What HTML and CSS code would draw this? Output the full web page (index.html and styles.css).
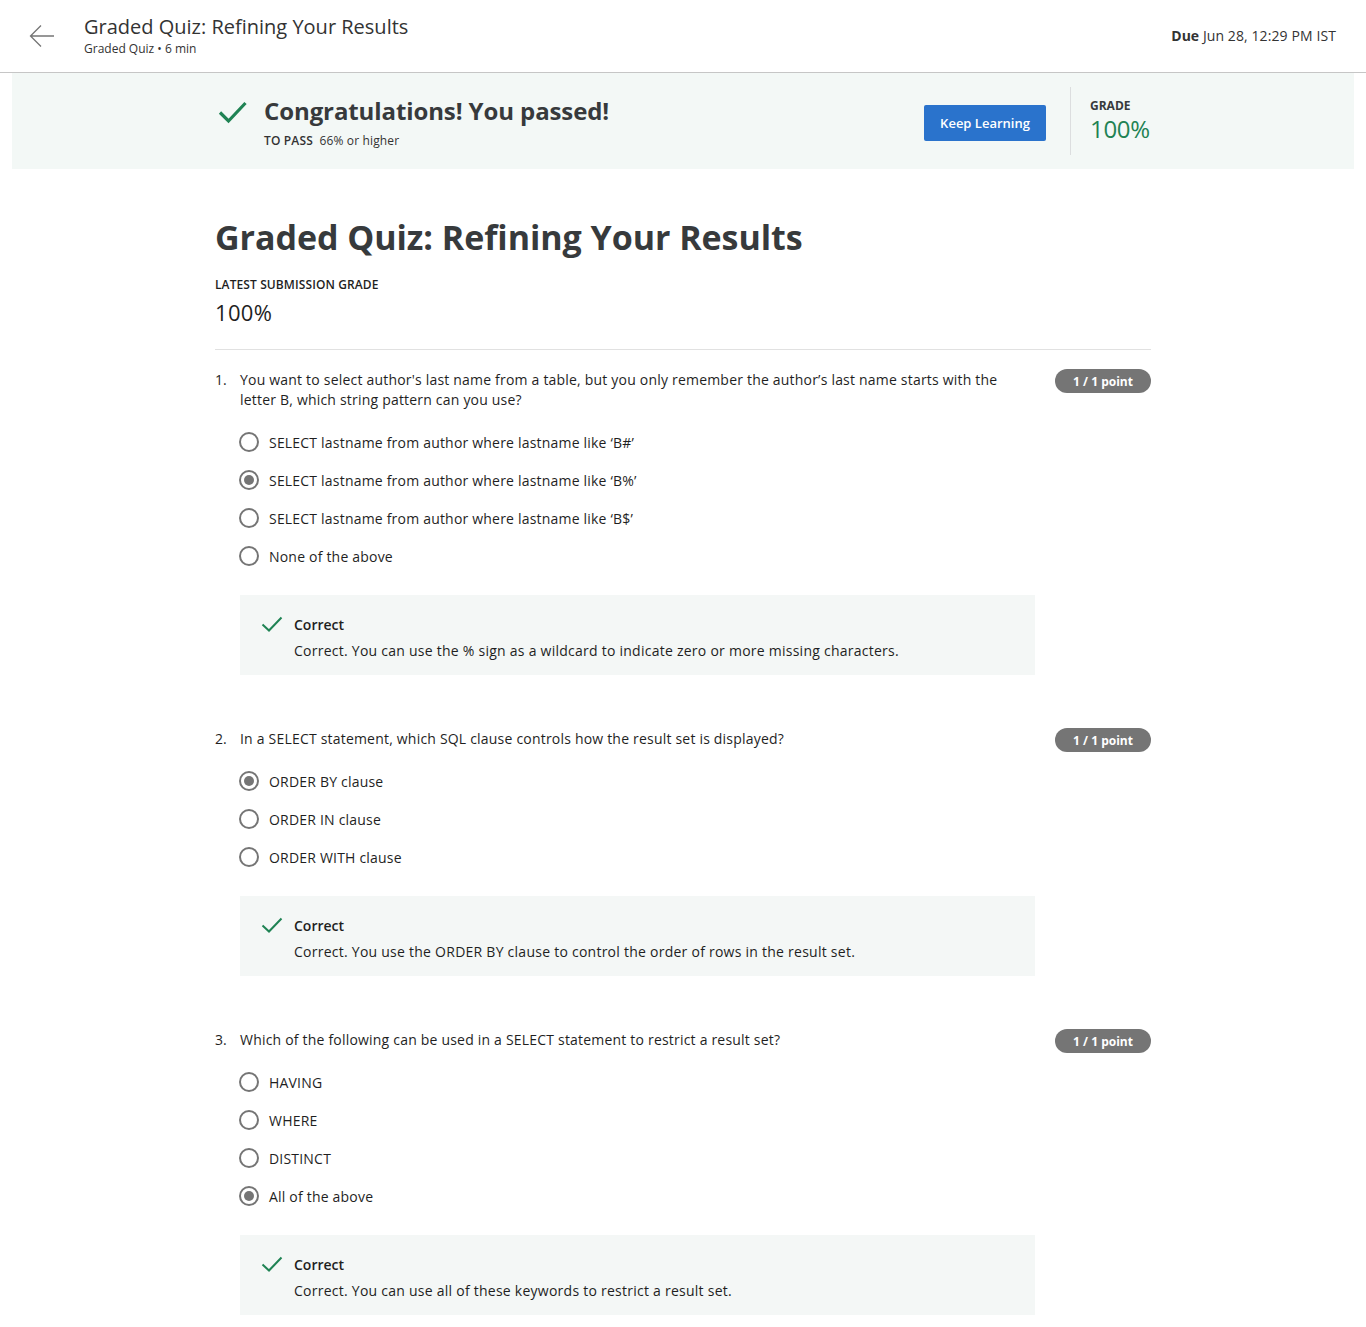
FILE: index.html
```html
<!DOCTYPE html>
<html lang="en">
<head>
<meta charset="utf-8">
<title>Graded Quiz: Refining Your Results</title>
<link rel="stylesheet" href="styles.css">
</head>
<body>
<header class="topbar">
  <div class="topbar-left">
    <svg class="back" width="26" height="26" viewBox="0 0 26 26" aria-hidden="true"><path d="M25 13H2M12 2.5L1.5 13 12 23.5" fill="none" stroke="#757575" stroke-width="1.3"/></svg>
    <div class="topbar-titles">
      <div class="topbar-title">Graded Quiz: Refining Your Results</div>
      <div class="topbar-sub">Graded Quiz • 6 min</div>
    </div>
  </div>
  <div class="due"><b>Due</b> Jun 28, 12:29 PM IST</div>
</header>

<section class="banner">
  <div class="banner-inner">
    <svg class="banner-check" width="30" height="24" viewBox="0 0 30 24" aria-hidden="true"><path d="M2 12.5l8.5 8.5L27.5 3" fill="none" stroke="#1f8354" stroke-width="3.2"/></svg>
    <div class="banner-text">
      <div class="banner-title">Congratulations! You passed!</div>
      <div class="banner-sub"><b>TO PASS</b>&nbsp; 66% or higher</div>
    </div>
    <button class="btn">Keep Learning</button>
    <div class="banner-grade">
      <div class="label">GRADE</div>
      <div class="grade-val">100%</div>
    </div>
  </div>
</section>

<main class="content">
  <h1 class="page-title">Graded Quiz: Refining Your Results</h1>
  <div class="label latest">LATEST SUBMISSION GRADE</div>
  <div class="latest-val">100%</div>
  <hr class="divider">

  <div class="question">
    <div class="q-num">1.</div>
    <div class="q-body">
      <div class="q-text">You want to select author's last name from a table, but you only remember the author’s last name starts with the letter B, which string pattern can you use?</div>
      <div class="options">
        <div class="opt"><span class="radio"></span>SELECT lastname from author where lastname like ‘B#’</div>
        <div class="opt"><span class="radio on"></span>SELECT lastname from author where lastname like ‘B%’</div>
        <div class="opt"><span class="radio"></span>SELECT lastname from author where lastname like ‘B$’</div>
        <div class="opt"><span class="radio"></span>None of the above</div>
      </div>
      <div class="feedback">
        <svg class="fb-check" width="22" height="16" viewBox="0 0 22 16" aria-hidden="true"><path d="M1.5 8.5l6.5 6L20.5 1.5" fill="none" stroke="#1f8354" stroke-width="2"/></svg>
        <div>
          <div class="fb-title">Correct</div>
          <div class="fb-text">Correct. You can use the % sign as a wildcard to indicate zero or more missing characters.</div>
        </div>
      </div>
    </div>
    <div class="badge">1 / 1 point</div>
  </div>

  <div class="question">
    <div class="q-num">2.</div>
    <div class="q-body">
      <div class="q-text">In a SELECT statement, which SQL clause controls how the result set is displayed?</div>
      <div class="options">
        <div class="opt"><span class="radio on"></span>ORDER BY clause</div>
        <div class="opt"><span class="radio"></span>ORDER IN clause</div>
        <div class="opt"><span class="radio"></span>ORDER WITH clause</div>
      </div>
      <div class="feedback">
        <svg class="fb-check" width="22" height="16" viewBox="0 0 22 16" aria-hidden="true"><path d="M1.5 8.5l6.5 6L20.5 1.5" fill="none" stroke="#1f8354" stroke-width="2"/></svg>
        <div>
          <div class="fb-title">Correct</div>
          <div class="fb-text">Correct. You use the ORDER BY clause to control the order of rows in the result set.</div>
        </div>
      </div>
    </div>
    <div class="badge">1 / 1 point</div>
  </div>

  <div class="question">
    <div class="q-num">3.</div>
    <div class="q-body">
      <div class="q-text">Which of the following can be used in a SELECT statement to restrict a result set?</div>
      <div class="options">
        <div class="opt"><span class="radio"></span>HAVING</div>
        <div class="opt"><span class="radio"></span>WHERE</div>
        <div class="opt"><span class="radio"></span>DISTINCT</div>
        <div class="opt"><span class="radio on"></span>All of the above</div>
      </div>
      <div class="feedback">
        <svg class="fb-check" width="22" height="16" viewBox="0 0 22 16" aria-hidden="true"><path d="M1.5 8.5l6.5 6L20.5 1.5" fill="none" stroke="#1f8354" stroke-width="2"/></svg>
        <div>
          <div class="fb-title">Correct</div>
          <div class="fb-text">Correct. You can use all of these keywords to restrict a result set.</div>
        </div>
      </div>
    </div>
    <div class="badge">1 / 1 point</div>
  </div>
</main>
</body>
</html>
```

FILE: styles.css
```css
* { box-sizing: border-box; }
body {
  margin: 0;
  font-family: "Open Sans", "Noto Sans", sans-serif;
  color: #1f1f1f;
  background: #fff;
}
.topbar {
  height: 73px;
  border-bottom: 1px solid #c6c6c6;
  display: flex;
  justify-content: space-between;
  align-items: flex-start;
  padding: 0 30px 0 29px;
}
.topbar-left { display: flex; align-items: flex-start; }
.back { margin-top: 23px; margin-right: 29px; }
.topbar-titles { padding-top: 13px; }
.topbar-title { font-size: 20px; line-height: 28px; color: #333; }
.topbar-sub { font-size: 12px; line-height: 16px; color: #333; }
.due { padding-top: 26px; font-size: 14px; line-height: 20px; color: #333; letter-spacing: 0.1px; }
.due b { font-weight: 700; letter-spacing: 0; }

.banner {
  margin: 0 12px;
  height: 96px;
  background: #f3f8f6;
}
.banner-inner {
  width: 936px;
  margin: 0 auto;
  height: 100%;
  display: flex;
  align-items: center;
}
.banner-check { margin: 0 16px 0 3px; align-self: flex-start; margin-top: 27px; }
.banner-text { flex: 1; align-self: flex-start; padding-top: 21px; }
.banner-title { font-size: 24px; font-weight: 700; line-height: 34px; color: #373a3c; letter-spacing: -0.1px; }
.banner-sub { font-size: 12px; line-height: 18px; color: #333; margin-top: 4px; letter-spacing: 0.15px; }
.banner-sub b { font-weight: 600; }
.btn {
  background: #2a73cc;
  color: #fff;
  border: 0;
  border-radius: 2px;
  width: 122px;
  height: 36px;
  font-family: inherit;
  font-size: 13px;
  font-weight: 600;
  padding: 0;
  margin-top: 4px;
}
.banner-grade {
  margin-left: 24px;
  border-left: 1px solid #dcdedf;
  height: 68px;
  padding-left: 19px;
  width: 81px;
  align-self: center;
  padding-top: 11px;
}
.label { font-size: 12px; font-weight: 700; line-height: 16px; color: #373a3c; }
.grade-val { font-size: 24px; line-height: 30px; color: #1f8354; letter-spacing: -0.3px; }

.content {
  width: 936px;
  margin: 0 auto;
  padding-top: 45px;
}
.page-title {
  margin: 0;
  font-size: 34px;
  line-height: 46px;
  font-weight: 700;
  color: #373a3c;
  letter-spacing: -0.05px;
}
.latest { margin-top: 17px; font-weight: 600; color: #1f1f1f; letter-spacing: 0.1px; }
.latest-val { font-size: 22px; line-height: 30px; margin-top: 4px; color: #1f1f1f; letter-spacing: 0.3px; }
.divider { border: 0; border-top: 1px solid #e1e1e1; margin: 22px 0 20px; }

.question {
  display: flex;
  align-items: flex-start;
  margin-bottom: 54px;
}
.q-num { width: 25px; font-size: 14px; line-height: 20px; }
.q-body { width: 795px; }
.q-text { font-size: 14px; line-height: 20px; padding-right: 35px; letter-spacing: 0.2px; }
.options { margin-top: 13px; }
.opt {
  height: 38px;
  display: flex;
  align-items: center;
  font-size: 14px;
  margin-left: -1px;
  letter-spacing: 0.2px;
}
.radio {
  width: 20px;
  height: 20px;
  border: 2px solid #757575;
  border-radius: 50%;
  margin-right: 10px;
  flex: none;
  display: flex;
  align-items: center;
  justify-content: center;
}
.radio.on::after {
  content: "";
  width: 10px;
  height: 10px;
  border-radius: 50%;
  background: #757575;
}
.feedback {
  margin-top: 20px;
  background: #f4f7f6;
  height: 80px;
  padding: 20px 20px 0 21px;
  display: flex;
  align-items: flex-start;
  gap: 11px;
}
.fb-check { margin-top: 1px; }
.fb-title { font-size: 14px; font-weight: 600; line-height: 20px; color: #1f1f1f; }
.fb-text { font-size: 14px; line-height: 20px; margin-top: 6px; letter-spacing: 0.25px; }
.badge {
  margin-left: 20px;
  margin-top: -1px;
  width: 96px;
  height: 24px;
  border-radius: 12px;
  background: #757575;
  color: #fff;
  font-size: 12px;
  font-weight: 700;
  display: flex;
  align-items: center;
  justify-content: center;
}
```
